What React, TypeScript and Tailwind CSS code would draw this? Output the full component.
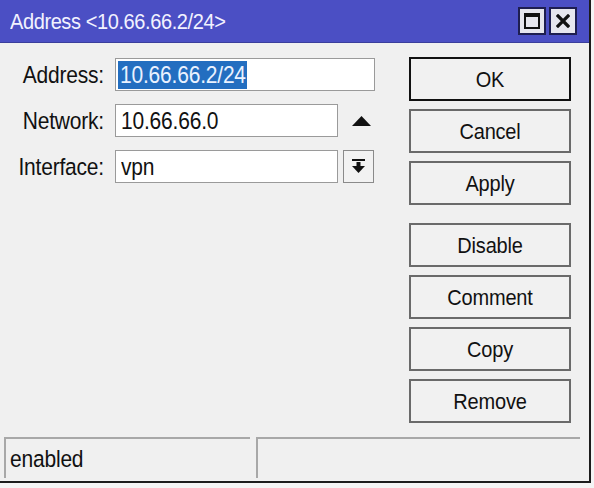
const font = { fontFamily: '"Liberation Sans", Arial, sans-serif' };

const T = ({ children, className = '' }: { children: React.ReactNode; className?: string }) => (
  <span className={`inline-block scale-y-110 tracking-[-0.2px] ${className}`}>{children}</span>
);

const Field = ({ label, children }: { label: string; children: React.ReactNode }) => (
  <div className="flex items-center h-[33px]">
    <div className="w-[104px] text-right text-[21px] leading-none text-[#111]">
      <T>{label}</T>
    </div>
    <div className="ml-[11px] flex items-center h-full">{children}</div>
  </div>
);

const Button = ({ label, primary }: { label: string; primary?: boolean }) => (
  <div
    className={`h-[44px] w-[162px] flex items-center justify-center bg-[#f1f1f1] text-[20px] text-[#111] ${
      primary ? 'border-2 border-[#111]' : 'border-2 border-[#6a6a6a]'
    }`}
  >
    <T>{label}</T>
  </div>
);

export default function App() {
  return (
    <div className="w-[594px] h-[488px] bg-[#f4f4f4] overflow-hidden relative" style={font}>
      <div className="w-[591px] h-[483px] flex flex-col border-r-2 border-b-2 border-[#1c1c1c]">
        {/* Title bar */}
        <div className="h-[43px] bg-[#4b4fc4] flex items-center pl-[10px] pr-[12px] border-b border-[#3a3e9c]">
          <span className="text-[20px] text-[#f2f2ff]">
            <T className="tracking-[-0.4px]">Address &lt;10.66.66.2/24&gt;</T>
          </span>
          <div className="ml-auto flex gap-[3px]">
            <div className="w-[28px] h-[28px] bg-[#e6e6ee] border-2 border-[#1e1e50] flex items-center justify-center">
              <div className="w-[16px] h-[16px] border-2 border-t-[4px] border-[#111]" />
            </div>
            <div className="w-[28px] h-[28px] bg-[#e6e6ee] border-2 border-[#1e1e50] flex items-center justify-center">
              <svg width="14" height="14" viewBox="0 0 14 14">
                <path d="M2 2 L12 12 M12 2 L2 12" stroke="#111" strokeWidth="3.2" strokeLinecap="square" />
              </svg>
            </div>
          </div>
        </div>

        {/* Body */}
        <div className="flex-1 bg-[#f0f0f0] flex flex-col">
          <div className="flex flex-1">
            <div className="flex flex-col gap-[13px] pt-[15px]">
              <Field label="Address:">
                <div className="w-[260px] h-[33px] bg-white border border-[#9a9a9a] flex items-center pl-[2px]">
                  <span className="bg-[#236ec0] text-[#eaf2ff] text-[21px] leading-[28px] pl-[2px] pr-[1px]">
                    <T>10.66.66.2/24</T>
                  </span>
                </div>
              </Field>
              <Field label="Network:">
                <div className="w-[223px] h-[33px] bg-white border border-[#9a9a9a] flex items-center pl-[5px] text-[21px] text-[#111]">
                  <T>10.66.66.0</T>
                </div>
                <svg className="ml-[14px]" width="19" height="10" viewBox="0 0 19 10">
                  <path d="M9.5 0 L19 10 L0 10 Z" fill="#111" />
                </svg>
              </Field>
              <Field label="Interface:">
                <div className="w-[223px] h-[33px] bg-white border border-[#9a9a9a] flex items-center pl-[5px] text-[21px] text-[#111]">
                  <T>vpn</T>
                </div>
                <div className="ml-[5px] w-[31px] h-[33px] border border-[#8a8a8a] bg-[#f2f2f2] flex items-center justify-center">
                  <svg width="13" height="15" viewBox="0 0 13 15">
                    <rect x="0" y="0" width="13" height="2" fill="#111" />
                    <rect x="4.5" y="3" width="4" height="5" fill="#111" />
                    <path d="M0 7 L13 7 L6.5 14 Z" fill="#111" />
                  </svg>
                </div>
              </Field>
            </div>

            <div className="ml-auto mr-[18px] pt-[14px] flex flex-col">
              <div className="flex flex-col gap-[8px]">
                <Button label="OK" primary />
                <Button label="Cancel" />
                <Button label="Apply" />
              </div>
              <div className="flex flex-col gap-[8px] mt-[18px]">
                <Button label="Disable" />
                <Button label="Comment" />
                <Button label="Copy" />
                <Button label="Remove" />
              </div>
            </div>
          </div>

          {/* Status bar */}
          <div className="flex gap-[6px] pl-[4px] pr-[9px] pb-[3px] h-[44px]">
            <div className="w-[246px] h-full border-t-2 border-l-2 border-[#a8a8a8] flex items-center pl-[4px] text-[21px] text-[#111]">
              <T>enabled</T>
            </div>
            <div className="flex-1 h-full border-t-2 border-l-2 border-[#a8a8a8]" />
          </div>
        </div>
      </div>
    </div>
  );
}
